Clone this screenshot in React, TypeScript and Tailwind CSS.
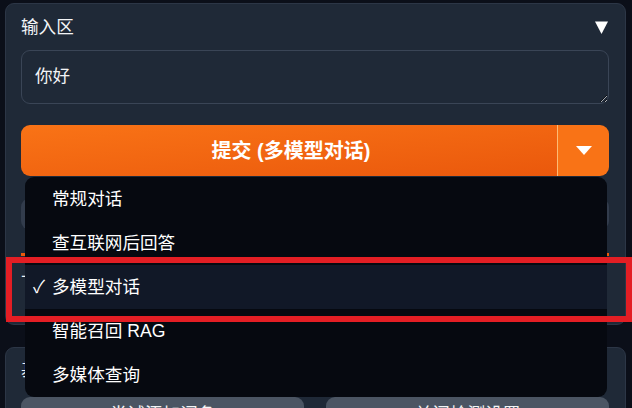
import { useState } from "react";

const MODES = ["常规对话", "查互联网后回答", "多模型对话", "智能召回 RAG", "多媒体查询"];

export default function App() {
  const [selected, setSelected] = useState(2);

  return (
    <div className="w-[632px] h-[408px] overflow-hidden bg-[#0b0f19] pl-[5px] pr-[6px] pt-[3px] font-['Liberation_Sans','Noto_Sans_CJK_SC',sans-serif] text-[17.6px] text-[#f3f4f6] relative">
      {/* Input panel */}
      <div className="rounded-[9px] border border-[#2c3646] bg-[#1f2937] pl-[15px] pr-[16px] pt-[11px] h-[322px]">
        <div className="flex items-center justify-between h-[24px] leading-[24px]">
          <span>输入区</span>
          <svg width="13" height="13" viewBox="0 0 13 13" className="mr-[1px]">
            <path d="M0 0.5 H13 L6.5 13 Z" fill="#ffffff" />
          </svg>
        </div>

        <textarea
          defaultValue="你好"
          className="block mt-[11px] w-full h-[54px] rounded-[9px] border border-[#3a4556] bg-[#1f2937] pl-[13px] pt-[13px] leading-[24px] text-[#f3f4f6] outline-none resize-y"
        />

        {/* Split submit button */}
        <div className="relative mt-[21px]">
          <div className="flex h-[51px] rounded-[9px] overflow-hidden">
            <button className="flex-1 bg-linear-to-br from-[#f97316] to-[#ea580c] text-white font-bold text-[20px] flex items-center justify-center pl-[4px]">
              提交 ({MODES[selected]})
            </button>
            <div className="w-px bg-[#fdba74]" />
            <button className="w-[51px] bg-[#f97316] flex items-center justify-center">
              <svg width="16" height="10" viewBox="0 0 16 10">
                <path d="M0 0 H16 L8 9 Z" fill="#ffffff" />
              </svg>
            </button>
          </div>

          {/* Dropdown menu */}
          <div className="absolute z-10 top-[52px] left-[4px] right-[2px] rounded-[9px] bg-[#060910] overflow-hidden">
            {MODES.map((m, i) => (
              <div
                key={m}
                onClick={() => setSelected(i)}
                className={`relative h-[44px] flex items-center pl-[27px] leading-[24px] text-white ${i === selected ? "bg-[#111827]" : ""}`}
              >
                {i === selected && <span className="absolute left-[8px]">✓</span>}
                {m}
              </div>
            ))}
          </div>
        </div>

        {/* Content hidden under the menu */}
        <div className="mt-[22px] h-[32px] rounded-[9px] bg-[#323c4c]" />
        <div className="mt-[23px] h-[3px] bg-[#ea580c]" />
        <div className="mt-[2px] leading-[24px]">上传文件</div>
      </div>

      {/* Settings panel */}
      <div className="mt-[22px] rounded-[9px] border border-[#2c3646] bg-[#1f2937] pl-[15px] pr-[16px] pt-[10px] h-[80px]">
        <div className="leading-[24px]">基础设置</div>
        <div className="mt-[15px] grid grid-cols-2 gap-[22px]">
          <div className="h-[36px] rounded-[9px] bg-[#4b5563] text-center leading-[24px] pt-[5px]">尝试添加词条</div>
          <div className="h-[36px] rounded-[9px] bg-[#4b5563] text-center leading-[24px] pt-[5px]">关闭检测设置</div>
        </div>
      </div>

      {/* Highlight annotation */}
      <div className="absolute z-20 left-[6px] top-[257px] w-[626px] h-[65px] border-[6px] border-[#e31e24] pointer-events-none" />
    </div>
  );
}
